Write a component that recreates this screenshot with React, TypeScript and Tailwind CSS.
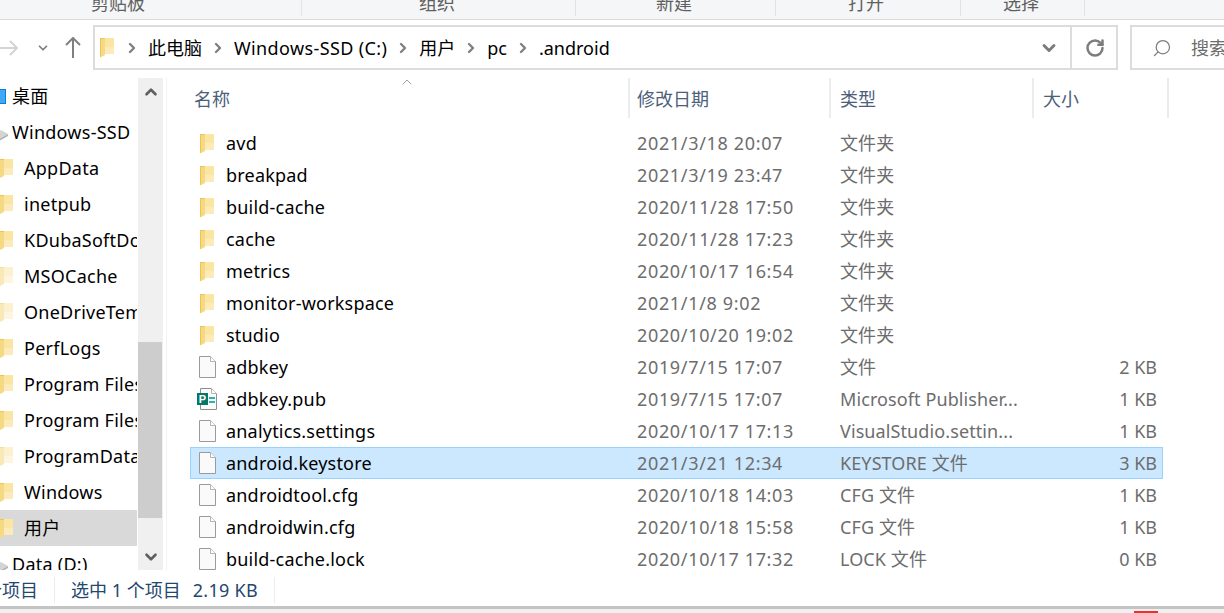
import { ChevronDown, ChevronRight, ChevronUp, RotateCw, Search } from "lucide-react";

interface FileRow {
  name: string;
  date: string;
  type: string;
  size?: string;
  kind: "folder" | "file" | "publisher";
  selected?: boolean;
}

const ribbonGroups = [
  { label: "剪贴板", width: "w-[302px]", pad: "pl-[91px]" },
  { label: "组织", width: "w-[274px]", pad: "pl-[117px]" },
  { label: "新建", width: "w-[200px]", pad: "pl-[80px]" },
  { label: "打开", width: "w-[185px]", pad: "pl-[72px]" },
  { label: "选择", width: "w-[124px]", pad: "pl-[42px]" },
];

const crumbs = ["此电脑", "Windows-SSD (C:)", "用户", "pc", ".android"];

const navItems = [
  { name: "桌面", kind: "desktop" },
  { name: "Windows-SSD", kind: "drive" },
  { name: "AppData", kind: "folder" },
  { name: "inetpub", kind: "folder" },
  { name: "KDubaSoftDownloads", kind: "folder" },
  { name: "MSOCache", kind: "paleFolder" },
  { name: "OneDriveTemp", kind: "paleFolder" },
  { name: "PerfLogs", kind: "folder" },
  { name: "Program Files", kind: "folder" },
  { name: "Program Files (x86)", kind: "folder" },
  { name: "ProgramData", kind: "paleFolder" },
  { name: "Windows", kind: "folder" },
  { name: "用户", kind: "folder", active: true },
  { name: "Data (D:)", kind: "drive" },
];

const files: FileRow[] = [
  { name: "avd", date: "2021/3/18 20:07", type: "文件夹", kind: "folder" },
  { name: "breakpad", date: "2021/3/19 23:47", type: "文件夹", kind: "folder" },
  { name: "build-cache", date: "2020/11/28 17:50", type: "文件夹", kind: "folder" },
  { name: "cache", date: "2020/11/28 17:23", type: "文件夹", kind: "folder" },
  { name: "metrics", date: "2020/10/17 16:54", type: "文件夹", kind: "folder" },
  { name: "monitor-workspace", date: "2021/1/8 9:02", type: "文件夹", kind: "folder" },
  { name: "studio", date: "2020/10/20 19:02", type: "文件夹", kind: "folder" },
  { name: "adbkey", date: "2019/7/15 17:07", type: "文件", size: "2 KB", kind: "file" },
  { name: "adbkey.pub", date: "2019/7/15 17:07", type: "Microsoft Publisher...", size: "1 KB", kind: "publisher" },
  { name: "analytics.settings", date: "2020/10/17 17:13", type: "VisualStudio.settin...", size: "1 KB", kind: "file" },
  { name: "android.keystore", date: "2021/3/21 12:34", type: "KEYSTORE 文件", size: "3 KB", kind: "file", selected: true },
  { name: "androidtool.cfg", date: "2020/10/18 14:03", type: "CFG 文件", size: "1 KB", kind: "file" },
  { name: "androidwin.cfg", date: "2020/10/18 15:58", type: "CFG 文件", size: "1 KB", kind: "file" },
  { name: "build-cache.lock", date: "2020/10/17 17:32", type: "LOCK 文件", size: "0 KB", kind: "file" },
];

const columns = [
  { label: "名称", width: "w-[463px]", pad: "pl-[27px]" },
  { label: "修改日期", width: "w-[201px]", pad: "pl-[7px]" },
  { label: "类型", width: "w-[203px]", pad: "pl-[9px]" },
  { label: "大小", width: "w-[135px]", pad: "pl-[9px]" },
];

const FolderIcon = ({ pale = false }: { pale?: boolean }) => (
  <svg width="16" height="21" viewBox="0 0 16 21" className="shrink-0">
    <path d="M4 1h11v16H4z" fill={pale ? "#fcf0cf" : "#fbe5a2"} />
    <path d="M4 10h11v7H4z" fill={pale ? "#fdf5e0" : "#fcebb8"} />
    <path d="M1 1h5v17l-5 2.5z" fill={pale ? "#f9e8b8" : "#f6d983"} />
    <path d="M1 1h5l-1 1H2v17l-1 1.5z" fill={pale ? "#f3dda0" : "#eec453"} />
  </svg>
);

const DocIcon = () => (
  <svg width="17" height="22" viewBox="0 0 17 22" className="shrink-0">
    <path d="M.5.5h11l5 5v16H.5z" fill="#fafafa" stroke="#9a9a9a" />
    <path d="M11.5.5v5h5" fill="#ffffff" stroke="#b4b4b4" />
  </svg>
);

const PublisherIcon = () => (
  <svg width="20" height="22" viewBox="0 0 20 22" className="shrink-0">
    <path d="M3.5.5h11l5 5v16h-16z" fill="#fafafa" stroke="#8f8f8f" />
    <path d="M14.5.5v5h5" fill="#ffffff" stroke="#b4b4b4" />
    <path d="M12 9h6v2h-6zM12 13h6v2h-6z" fill="#27b6ad" />
    <rect x="0" y="5" width="11" height="12" fill="#077568" />
    <text x="5.5" y="15" textAnchor="middle" fontSize="11" fontWeight="700" fill="#ffffff" fontFamily="Liberation Sans, sans-serif">
      P
    </text>
  </svg>
);

const NavIcon = ({ kind }: { kind: string }) => {
  if (kind === "desktop") {
    return <div className="ml-[-10px] h-[15px] w-[16px] shrink-0 border border-[#0a7fd6] bg-[#3fa9f5]" />;
  }
  if (kind === "drive") {
    return (
      <svg width="16" height="12" viewBox="0 0 16 12" className="ml-[-8px] mt-[6px] shrink-0">
        <path d="M0 5l9-4 7 4-9 5z" fill="#d4d4d4" />
        <path d="M0 5l7 5v2l-7-4z" fill="#9b9b9b" />
        <path d="M7 10l9-5v2l-9 5z" fill="#b2b2b2" />
      </svg>
    );
  }
  return (
    <div className="ml-[-2px] shrink-0">
      <FolderIcon pale={kind === "paleFolder"} />
    </div>
  );
};

export default function App() {
  return (
    <div className="flex h-[613px] w-[1224px] flex-col overflow-hidden bg-white font-['Noto_Sans','Noto_Sans_CJK_SC',sans-serif] text-[18px] leading-[24px] text-black">
      {/* ribbon group captions, only their lower edge is in view */}
      <div className="flex h-[20px] shrink-0 items-start overflow-hidden border-b border-[#dadbdc] bg-[#f5f6f7]">
        {ribbonGroups.map((group) => (
          <div key={group.label} className={`h-[16px] shrink-0 border-r border-[#e2e3e4] ${group.width} ${group.pad}`}>
            <div className="-mt-[9px] text-[#5f5f5f]">{group.label}</div>
          </div>
        ))}
      </div>

      {/* navigation buttons, address bar, search box */}
      <div className="flex h-[58px] shrink-0 items-start pt-[5px]">
        <div className="flex h-[45px] w-[93px] shrink-0 items-center">
          <svg width="20" height="16" viewBox="0 0 20 16" fill="none" stroke="#d4d4d4" strokeWidth="2" className="ml-[-1px] shrink-0">
            <path d="M0 8h18M11 1l7 7-7 7" />
          </svg>
          <ChevronDown size={14} strokeWidth={3} className="ml-[17px] text-[#7d7d7d]" />
          <svg width="16" height="21" viewBox="0 0 16 21" fill="none" stroke="#7f7f7f" strokeWidth="2" className="ml-[15px] shrink-0">
            <path d="M8 1v20M1 8l7-7 7 7" />
          </svg>
        </div>
        <div className="flex h-[45px] w-[1025px] shrink-0 items-center border-2 border-[#dcdcdc]">
          <div className="ml-[4px] mr-[1px]">
            <FolderIcon />
          </div>
          {crumbs.map((crumb) => (
            <div key={crumb} className="flex items-center">
              <ChevronRight size={16} strokeWidth={3.5} className="mx-[8px] text-[#7f7f7f]" />
              <span className={crumb.startsWith("Windows") ? "tracking-[0.37px]" : ""}>{crumb}</span>
            </div>
          ))}
          <div className="flex-1" />
          <ChevronDown size={20} strokeWidth={3.5} className="mr-[11px] text-[#7b7b7b]" />
          <div className="flex h-full w-[46px] items-center justify-center border-l-2 border-[#dcdcdc] pl-[2px]">
            <RotateCw size={20} strokeWidth={3} className="text-[#7d7d7d]" />
          </div>
        </div>
        <div className="ml-[12px] flex h-[45px] flex-1 items-center border-2 border-r-0 border-[#dcdcdc] pl-[20px]">
          <Search size={20} strokeWidth={1.5} className="-scale-x-100 text-[#7d7d7d]" />
          <span className="ml-[19px] whitespace-nowrap text-[#6d6d6d]">搜索</span>
        </div>
      </div>

      <div className="flex h-[496px] shrink-0">
        {/* navigation tree */}
        <div className="flex h-[492px] w-[138px] shrink-0 flex-col overflow-hidden">
          {navItems.map((item) => (
            <div
              key={item.name}
              className={`flex h-[36px] w-[137px] shrink-0 items-center overflow-hidden whitespace-nowrap tracking-[0.25px] ${item.active ? "bg-[#d9d9d9]" : ""}`}
            >
              <NavIcon kind={item.kind} />
              <span className={item.kind === "desktop" ? "ml-[6px]" : item.kind === "drive" ? "ml-[4px]" : "ml-[10px]"}>{item.name}</span>
            </div>
          ))}
        </div>

        {/* tree scrollbar */}
        <div className="flex h-[492px] w-[25px] shrink-0 flex-col items-center bg-[#f0f0f0]">
          <ChevronUp size={18} strokeWidth={3.5} className="mt-[5px] text-[#606060]" />
          <div className="mt-[241px] h-[176px] w-full border-r border-[#f0f0f0] bg-[#cdcdcd]" />
          <ChevronDown size={18} strokeWidth={3.5} className="mt-[30px] text-[#606060]" />
        </div>
        <div className="ml-[3px] h-[492px] w-px shrink-0 bg-[#f2f2f2]" />

        {/* file list */}
        <div className="relative min-w-0 flex-1">
          <ChevronUp size={16} strokeWidth={1} className="absolute left-[232px] top-[-4px] text-[#6f6f6f]" />
          <div className="flex h-[40px]">
            {columns.map((col) => (
              <div key={col.label} className={`flex h-full shrink-0 items-center border-r-2 border-[#ececec] pt-[1px] text-[#4c607a] ${col.width} ${col.pad}`}>
                {col.label}
              </div>
            ))}
          </div>
          <div className="ml-[23px] mt-[9px] w-[973px]">
            {files.map((file) => (
              <div
                key={file.name}
                className={`flex h-[32px] items-center border ${file.selected ? "border-[#99d1ff] bg-[#cce8ff]" : "border-transparent"}`}
              >
                <div className={`flex w-[35px] shrink-0 ${file.kind === "publisher" ? "pl-[6px]" : "pl-[8px]"}`}>
                  {file.kind === "folder" && <FolderIcon />}
                  {file.kind === "file" && <DocIcon />}
                  {file.kind === "publisher" && <PublisherIcon />}
                </div>
                <span className="w-[411px] shrink-0 tracking-[0.2px]">{file.name}</span>
                <span className="w-[203px] shrink-0 tracking-[0.66px] text-[#6d6d6d]">{file.date}</span>
                <span className="w-[200px] shrink-0 whitespace-nowrap tracking-[0.1px] text-[#6d6d6d]">{file.type}</span>
                <span className="flex-1 pr-[5px] text-right text-[#6d6d6d]">{file.size}</span>
              </div>
            ))}
          </div>
        </div>
      </div>

      {/* status bar */}
      <div className="flex h-[32px] shrink-0 items-center text-[#24476f]">
        <div className="flex h-[26px] w-[55px] shrink-0 items-center justify-end overflow-hidden whitespace-nowrap border-r border-[#ececec] pr-[16px]">
          14 个项目
        </div>
        <span className="ml-[16px] whitespace-nowrap">选中 1 个项目</span>
        <span className="ml-[12px] whitespace-nowrap tracking-[0.3px]">2.19 KB</span>
        <div className="ml-[16px] h-[26px] w-px bg-[#ececec]" />
      </div>

      {/* edge of the window and what sits beneath it */}
      <div className="h-[3px] shrink-0 bg-[#c4c4c4]" />
      <div className="flex flex-1 items-end bg-[#f0f0f0]">
        <div className="ml-[1134px] h-[2px] w-[24px] bg-[#e8322e]" />
      </div>
    </div>
  );
}
